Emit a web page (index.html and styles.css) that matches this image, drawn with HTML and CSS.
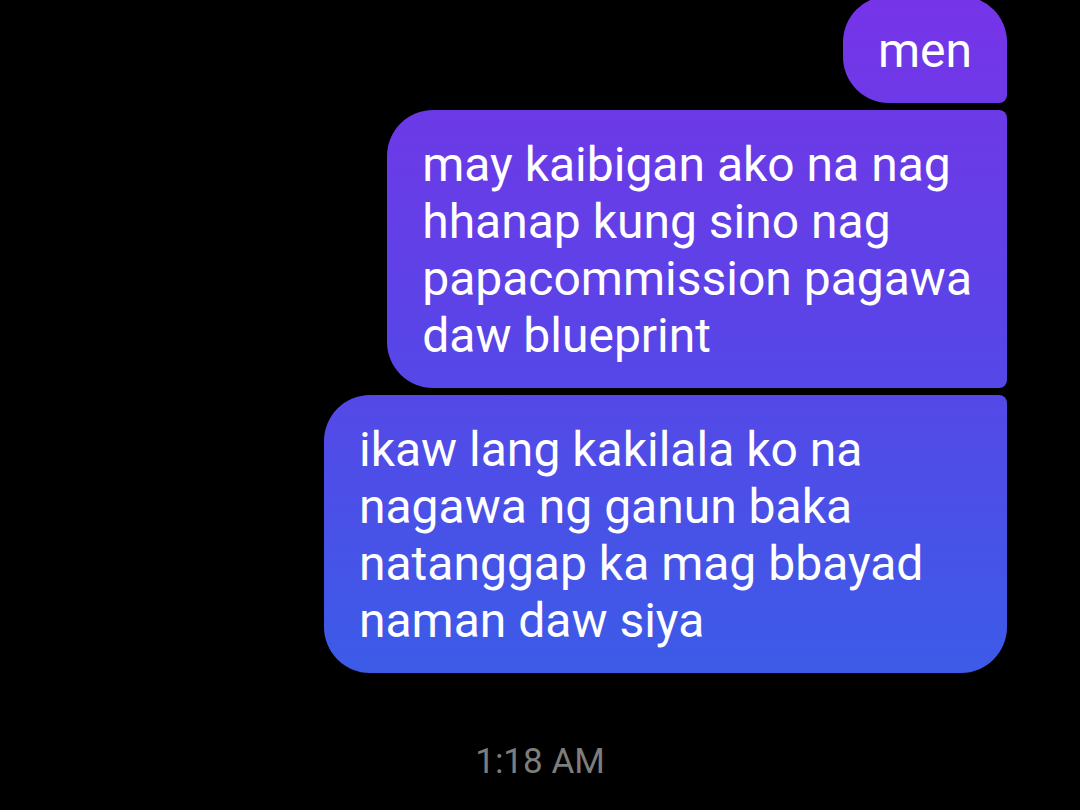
FILE: index.html
```html
<!DOCTYPE html>
<html lang="tl">
<head>
<meta charset="utf-8">
<title>Chat</title>
<link rel="stylesheet" href="styles.css">
</head>
<body>
<main class="chat">
  <div class="thread">
    <div class="bubble first">men</div>
    <div class="bubble middle">may kaibigan ako na nag<br>hhanap kung sino nag<br>papacommission pagawa<br>daw blueprint</div>
    <div class="bubble last full">ikaw lang kakilala ko na<br>nagawa ng ganun baka<br>natanggap ka mag bbayad<br>naman daw siya</div>
  </div>
  <div class="timestamp">1:18 AM</div>
</main>
</body>
</html>
```

FILE: styles.css
```css
html, body {
  margin: 0;
  padding: 0;
  background: #000;
  height: 100%;
  overflow: hidden;
}

.chat {
  font-family: Roboto, "Noto Sans", sans-serif;
}

.thread {
  display: flex;
  flex-direction: column;
  align-items: flex-end;
  gap: 7px;
  margin-top: -4px;
  padding-right: 73px;
}

.bubble {
  box-sizing: border-box;
  width: max-content;
  max-width: 683px;
  padding: 26px 35px 24px 35px;
  font-size: 48px;
  line-height: 57px;
  color: #fff;
  background-image: linear-gradient(to bottom, #7634e8 0px, #5a44e7 330px, #3b5ce7 680px, #3560e6 810px);
  background-attachment: fixed;
  border-radius: 46px 8px 8px 46px;
}

.bubble.first {
  border-radius: 46px 46px 8px 46px;
}

.bubble.last {
  border-radius: 46px 8px 46px 46px;
}

.bubble.full {
  width: 683px;
}

.timestamp {
  margin-top: 68px;
  text-align: center;
  font-size: 35px;
  line-height: 41px;
  color: #7d7d7d;
}
```
